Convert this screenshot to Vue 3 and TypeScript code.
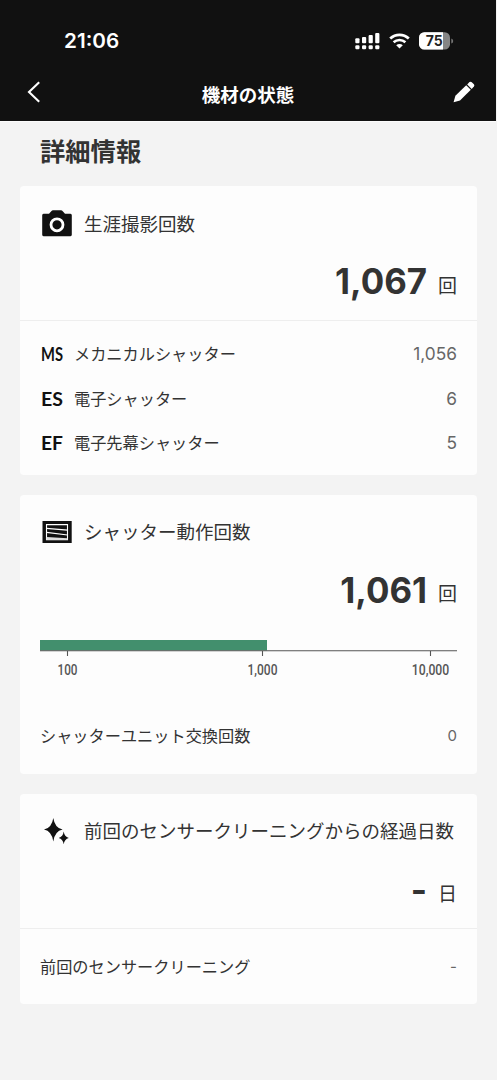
<script setup lang="ts">
interface Row {
  badge: string
  label: string
  value: string
}
interface Tick {
  label: string
  position: number
  width: number
}

const shutterTypes: Row[] = [
  { badge: 'MS', label: 'メカニカルシャッター', value: '1,056' },
  { badge: 'ES', label: '電子シャッター', value: '6' },
  { badge: 'EF', label: '電子先幕シャッター', value: '5' },
]
const ticks: Tick[] = [
  { label: '100', position: 27.5, width: 20 },
  { label: '1,000', position: 222.5, width: 30 },
  { label: '10,000', position: 390.5, width: 37.5 },
]
const badgeWidth = 22
const progress = 227
</script>

<template>
  <div class="screen">
    <header class="header">
      <div class="status">
        <span class="clock">21:06</span>
        <div class="indicators">
          <svg class="signal" width="26" height="18" viewBox="0 0 26 18" fill="#fff">
            <rect x="0.3" y="6.3" width="4.2" height="5" rx="1" />
            <rect x="7" y="5" width="4.2" height="6.3" rx="1" />
            <rect x="13.6" y="3" width="4.2" height="8.3" rx="1" />
            <rect x="20.2" y="1" width="4.2" height="10.3" rx="1" />
            <rect x="0.3" y="13.3" width="4.2" height="4" rx="1.2" />
            <rect x="7" y="13.3" width="4.2" height="4" rx="1.2" />
            <rect x="13.6" y="13.3" width="4.2" height="4" rx="1.2" />
            <rect x="20.2" y="13.3" width="4.2" height="4" rx="1.2" />
          </svg>
          <svg class="wifi" width="21" height="16" viewBox="0 0 21 16">
            <path d="M1.2 5.6C6.5.6 14.5.6 19.8 5.6" fill="none" stroke="#fff" stroke-width="2.7" />
            <path d="M4.6 9.3C8 6.2 13 6.2 16.4 9.3" fill="none" stroke="#fff" stroke-width="2.6" />
            <path d="M10.5 15.6L7.2 12.2C9 10.6 12 10.6 13.8 12.2Z" fill="#fff" />
          </svg>
          <svg class="battery" width="35" height="18" viewBox="0 0 35 18">
            <defs>
              <clipPath id="cell"><rect x="0" y="0.3" width="31" height="17.2" rx="5.3" /></clipPath>
            </defs>
            <g clip-path="url(#cell)">
              <rect width="31" height="18" fill="#858585" />
              <rect width="24" height="18" fill="#fff" />
            </g>
            <path d="M32.3 6.4Q34.2 7 34.2 9T32.3 11.6Z" fill="#777" />
            <text x="15.2" y="14" text-anchor="middle" class="charge">75</text>
          </svg>
        </div>
      </div>
      <nav class="nav">
        <svg width="14" height="22" viewBox="0 0 14 22">
          <path d="M12.2 1.3L2 11L12.2 20.7" fill="none" stroke="#fff" stroke-width="2.1" />
        </svg>
        <h1 class="title">機材の状態</h1>
        <svg width="22" height="22" viewBox="0 0 22 22" fill="#fff">
          <path d="M.6 21.2L2.4 14.8L13.2 4.2L17.8 8.8L7 19.4Z" />
          <path d="M14.2 3.4L16.5 1.1Q17.6.2 18.8 1.2L20.9 3.3Q21.9 4.4 20.9 5.5L18.7 7.9Z" />
        </svg>
      </nav>
    </header>

    <main class="body">
      <h2 class="heading">詳細情報</h2>

      <section class="card lifetime">
        <div class="card-head">
          <svg class="icon" width="30" height="28" viewBox="0 0 30 28">
            <path d="M1.5 3.8H7L9.5 1Q10 .2 11 .2H19Q20 .2 20.5 1L23 3.8H28.5Q29.8 3.8 29.8 5.3V24.8Q29.8 26.2 28.5 26.2H1.5Q.2 26.2.2 24.8V5.3Q.2 3.8 1.5 3.8Z" fill="#111" />
            <circle cx="15" cy="14.8" r="6" fill="none" stroke="#fff" stroke-width="2.8" />
          </svg>
          <h3>生涯撮影回数</h3>
        </div>
        <p class="total"><strong>1,067</strong><span>回</span></p>
        <ul class="rows">
          <li v-for="row in shutterTypes" :key="row.label">
            <svg class="badge" width="32" height="24" viewBox="0 0 32 24">
              <text x="1" y="18.8" :textLength="badgeWidth" lengthAdjust="spacingAndGlyphs">{{ row.badge }}</text>
            </svg>
            <span class="label">{{ row.label }}</span>
            <span class="value">{{ row.value }}</span>
          </li>
        </ul>
      </section>

      <section class="card shutter">
        <div class="card-head">
          <svg class="icon" width="30" height="28" viewBox="0 0 30 28">
            <rect x="0.5" y="3" width="29.2" height="22" fill="#111" />
            <path d="M4.5 6.6H25.5V21.8H4.5Z" fill="none" stroke="#fff" stroke-width="1.1" />
            <path d="M4.5 10.4L25.5 12.2M4.5 14.4L25.5 17" fill="none" stroke="#fff" stroke-width="1.2" />
            <path d="M4.5 18.9L25.5 20.3V22H4.5Z" fill="#ddd" />
          </svg>
          <h3>シャッター動作回数</h3>
        </div>
        <p class="total"><strong>1,061</strong><span>回</span></p>
        <svg class="scale" width="417" height="42" viewBox="0 0 417 42">
          <rect x="0" y="0" :width="progress" height="10.5" fill="#428f6d" />
          <path d="M0 10.8H417" stroke="#555" stroke-width="1.1" />
          <g v-for="tick in ticks" :key="tick.label">
            <path :d="`M${tick.position} 11V16`" stroke="#555" stroke-width="1.1" />
            <text :x="tick.position" y="34.7" text-anchor="middle" :textLength="tick.width" lengthAdjust="spacingAndGlyphs">{{ tick.label }}</text>
          </g>
        </svg>
        <div class="footer-row">
          <span class="label">シャッターユニット交換回数</span>
          <span class="value small">0</span>
        </div>
      </section>

      <section class="card cleaning">
        <div class="card-head">
          <svg class="icon" width="30" height="28" viewBox="0 0 30 28" fill="#111">
            <path d="M11.3 0Q12.8 10 20.6 11.6Q12.8 13.2 11.3 23.5Q9.8 13.2 2 11.6Q9.8 10 11.3 0Z" />
            <path d="M21.7 13.5Q22.4 18.7 26.8 19.9Q22.4 21.1 21.7 26.3Q21 21.1 16.7 19.9Q21 18.7 21.7 13.5Z" />
          </svg>
          <h3>前回のセンサークリーニングからの経過日数</h3>
        </div>
        <p class="total"><strong>-</strong><span>日</span></p>
        <div class="footer-row">
          <span class="label">前回のセンサークリーニング</span>
          <span class="value small">-</span>
        </div>
      </section>
    </main>
  </div>
</template>

<style>
body {
  background: #f3f3f3;
}
</style>

<style scoped>
.screen {
  height: 1080px;
  overflow: hidden;
  background: #f3f3f3;
  color: #333;
  font-family: Inter, "Noto Sans CJK JP", sans-serif;
}
h1, h2, h3, p, ul {
  margin: 0;
  padding: 0;
}
svg {
  display: block;
  flex: none;
}
.header {
  width: 496px;
  height: 121px;
  background: #111;
  color: #fff;
  box-shadow: 0 1px 0 #fbfbfb;
}
.status {
  height: 66px;
  padding: 15px 42px 0 64px;
  box-sizing: border-box;
  display: flex;
  align-items: center;
  justify-content: space-between;
}
.clock {
  font-size: 20.7px;
  font-weight: 600;
  line-height: 51px;
}
.indicators {
  display: flex;
  align-items: center;
}
.wifi {
  margin-left: 8px;
}
.battery {
  margin-left: 9px;
}
.charge {
  font-size: 14px;
  font-weight: 700;
  fill: #222;
}
.nav {
  height: 52px;
  padding: 0 21px 0 27px;
  display: flex;
  align-items: center;
  justify-content: space-between;
}
.title {
  margin-left: 2px;
  padding-top: 3px;
  font-family: "Noto Sans CJK JP", sans-serif;
  font-size: 18.5px;
  font-weight: 700;
  line-height: 28px;
}
.body {
  padding: 10px 20px 0;
}
.heading {
  margin: 0 20px 15px;
  padding-top: 1px;
  font-size: 25.3px;
  font-weight: 700;
  line-height: 39px;
}
.card {
  width: 457px;
  margin-bottom: 20px;
  border-radius: 4px;
  background: #fdfdfd;
  overflow: hidden;
}
.lifetime {
  height: 289px;
  margin-bottom: 19.5px;
}
.shutter {
  height: 279.5px;
}
.cleaning {
  height: 210px;
}
.card-head {
  display: flex;
  align-items: center;
  height: 28px;
  padding: 23.5px 22px 0;
}
.card-head h3 {
  margin-left: 12px;
  padding-top: 1px;
  font-size: 18.5px;
  font-weight: 400;
  line-height: 28px;
  white-space: nowrap;
}
.shutter .card-head h3 {
  padding-top: 0;
}
.cleaning .card-head h3 {
  padding: 0 0 2px;
}
.total {
  height: 50px;
  margin-top: 18.5px;
  padding-right: 20px;
  display: flex;
  justify-content: flex-end;
  align-items: baseline;
  line-height: 50px;
}
.total strong {
  font-size: 34.8px;
  font-weight: 700;
}
.total span {
  position: relative;
  top: -1.5px;
  margin-left: 11px;
  font-size: 19px;
}
.rows {
  list-style: none;
  margin-top: 14px;
  padding: 11px 20px 0;
  border-top: 1px solid #eee;
}
.rows li {
  height: 44.4px;
  display: flex;
  align-items: center;
}
.badge text {
  font-family: Lato, sans-serif;
  font-size: 18.5px;
  font-weight: 700;
  fill: #111;
}
.label {
  font-size: 16.2px;
  line-height: 24px;
}
.badge + .label {
  margin-left: 2px;
}
.value {
  margin-left: auto;
  color: #666;
  font-size: 17.3px;
  line-height: 24px;
}
.value.small {
  font-size: 15px;
}
.scale {
  margin: 25px 20px 0;
}
.scale text {
  font-family: Roboto, sans-serif;
  font-size: 15px;
  font-weight: 500;
  fill: #555;
}
.footer-row {
  display: flex;
  align-items: center;
  height: 76px;
  padding: 0 20px;
}
.shutter .footer-row {
  margin-top: 16px;
}
.cleaning .footer-row {
  margin-top: 14px;
  border-top: 1px solid #eee;
}
</style>
